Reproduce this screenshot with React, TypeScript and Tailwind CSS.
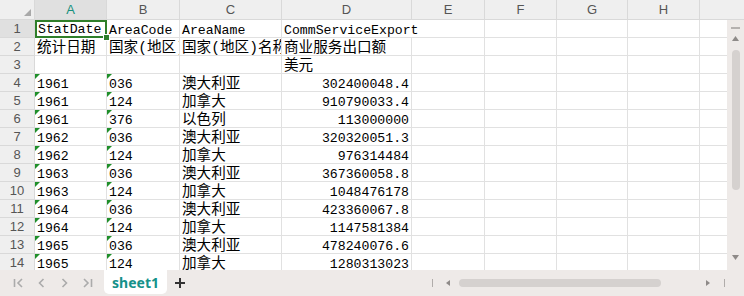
import React from "react";

const cols = [
  { key: "A", w: "w-[72px]" },
  { key: "B", w: "w-[73px]" },
  { key: "C", w: "w-[102px]" },
  { key: "D", w: "w-[130px]" },
  { key: "E", w: "w-[73px]" },
  { key: "F", w: "w-[72px]" },
  { key: "G", w: "w-[71px]" },
  { key: "H", w: "w-[72px]" },
];

type Row = { a?: string; b?: string; c?: string; d?: string; tri?: boolean; num?: boolean; spill?: boolean };

const rows: Row[] = [
  { a: "StatDate", b: "AreaCode", c: "AreaName", d: "CommServiceExport", spill: true },
  { a: "统计日期", b: "国家(地区)代码", c: "国家(地区)名称", d: "商业服务出口额" },
  { d: "美元" },
  { a: "1961", b: "036", c: "澳大利亚", d: "302400048.4", tri: true, num: true },
  { a: "1961", b: "124", c: "加拿大", d: "910790033.4", tri: true, num: true },
  { a: "1961", b: "376", c: "以色列", d: "113000000", tri: true, num: true },
  { a: "1962", b: "036", c: "澳大利亚", d: "320320051.3", tri: true, num: true },
  { a: "1962", b: "124", c: "加拿大", d: "976314484", tri: true, num: true },
  { a: "1963", b: "036", c: "澳大利亚", d: "367360058.8", tri: true, num: true },
  { a: "1963", b: "124", c: "加拿大", d: "1048476178", tri: true, num: true },
  { a: "1964", b: "036", c: "澳大利亚", d: "423360067.8", tri: true, num: true },
  { a: "1964", b: "124", c: "加拿大", d: "1147581384", tri: true, num: true },
  { a: "1965", b: "036", c: "澳大利亚", d: "478240076.6", tri: true, num: true },
  { a: "1965", b: "124", c: "加拿大", d: "1280313023", tri: true, num: true },
];

const cellFont = "font-['Liberation_Mono','Noto_Sans_CJK_SC',monospace] text-[13.2px] leading-[13px] text-black";
const isCjk = (s?: string) => !!s && /[\u4e00-\u9fff]/.test(s);

function Cell({ w, text, tri, right, spill }: { w: string; text?: string; tri?: boolean; right?: boolean; spill?: boolean }) {
  return (
    <div
      className={`relative ${w} shrink-0 h-[18px] border-b border-[#e1e1e1] flex items-end ${spill ? "overflow-visible z-10" : "overflow-hidden border-r"} ${right ? "justify-end pr-[2px]" : "pl-[2px]"}`}
    >
      {tri && (
        <span className="absolute left-0 top-0 w-0 h-0 border-t-[5px] border-r-[5px] border-t-[#1f8f2a] border-r-transparent" />
      )}
      {text && (
        <span className={`${cellFont} whitespace-nowrap ${isCjk(text) ? "text-[14.6px]" : ""}`}>{text}</span>
      )}
    </div>
  );
}

// the active cell A1 with its thick frame and fill handle
function ActiveCell({ text }: { text: string }) {
  return (
    <div className="relative w-[72px] shrink-0 h-[18px] z-20 border-2 border-solid border-[#2f7f2a] flex items-end pl-[1px]">
      <span className={`${cellFont} whitespace-nowrap leading-[12px]`}>{text}</span>
      <span className="absolute right-[-5px] bottom-[-5px] w-[7px] h-[7px] bg-[#2f7f2a] border border-solid border-white" />
    </div>
  );
}

export default function App() {
  return (
    <div className="w-[744px] h-[296px] bg-white overflow-hidden flex flex-col font-['Liberation_Sans',sans-serif]">
      {/* column header */}
      <div className="flex h-[20px] shrink-0 bg-[#efefef] border-b border-[#d9d9d9]">
        <div className="relative w-[35px] shrink-0 border-r border-[#d9d9d9]">
          <svg className="absolute right-[3px] bottom-[3px]" width="7" height="7" viewBox="0 0 7 7">
            <polygon points="7,0 7,7 0,7" fill="#a9a9a9" />
          </svg>
        </div>
        {cols.map((c) => (
          <div
            key={c.key}
            className={`${c.w} shrink-0 border-r border-[#d9d9d9] flex items-center justify-center text-[13px] ${c.key === "A" ? "bg-[#e0e0e0] text-[#17907d]" : "text-[#555]"}`}
          >
            {c.key}
          </div>
        ))}
        <div className="flex-1" />
      </div>

      {/* body */}
      <div className="flex h-[250px] shrink-0 overflow-hidden">
        <div className="flex-1 overflow-hidden">
          {rows.map((r, i) => (
            <div key={i} className="flex h-[18px]">
              <div className={`w-[35px] shrink-0 h-[18px] border-r border-b border-[#d9d9d9] flex items-center justify-center text-[13px] text-[#555] ${i === 0 ? "bg-[#e0e0e0]" : "bg-[#efefef]"}`}>
                {i + 1}
              </div>
              {i === 0 ? <ActiveCell text={r.a ?? ""} /> : <Cell w={cols[0].w} text={r.a} tri={r.tri} />}
              <Cell w={cols[1].w} text={r.b} tri={r.tri} />
              <Cell w={cols[2].w} text={r.c} />
              <Cell w={cols[3].w} text={r.d} right={r.num} spill={r.spill} />
              <Cell w={cols[4].w} />
              <Cell w={cols[5].w} />
              <Cell w={cols[6].w} />
              <Cell w={cols[7].w} />
              <div className="flex-1 h-[18px] border-b border-[#e1e1e1]" />
            </div>
          ))}
        </div>
        {/* vertical scrollbar */}
        <div className="w-[17px] shrink-0 bg-[#eeeae8] flex flex-col items-center pt-[7px]">
          <div className="w-[9px] h-[2px] bg-[#b5b1af]" />
          <svg className="mt-[7px]" width="7" height="5" viewBox="0 0 7 5">
            <polygon points="3.5,0 7,5 0,5" fill="#8e8a88" />
          </svg>
          <div className="mt-[9px] w-[8px] h-[140px] rounded-full bg-[#d5d1cf]" />
          <div className="flex-1" />
          <svg className="mb-[10px]" width="7" height="5" viewBox="0 0 7 5">
            <polygon points="0,0 7,0 3.5,5" fill="#8e8a88" />
          </svg>
        </div>
      </div>

      {/* sheet tabs */}
      <div className="flex-1 bg-[#eeeae8] flex items-start">
        <div className="flex items-center h-[26px] pl-[13px] gap-[12px]">
          <svg width="11" height="12" viewBox="0 0 11 12" fill="none" stroke="#ababab" strokeWidth="1.6">
            <path d="M1.5 2v8M9 2L5 6l4 4" />
          </svg>
          <svg width="11" height="12" viewBox="0 0 11 12" fill="none" stroke="#ababab" strokeWidth="1.6">
            <path d="M7.5 2L3.5 6l4 4" />
          </svg>
          <svg width="11" height="12" viewBox="0 0 11 12" fill="none" stroke="#ababab" strokeWidth="1.6">
            <path d="M3.5 2l4 4-4 4" />
          </svg>
          <svg width="11" height="12" viewBox="0 0 11 12" fill="none" stroke="#ababab" strokeWidth="1.6">
            <path d="M2 2l4 4-4 4M9.5 2v8" />
          </svg>
        </div>
        <div className="ml-[11px] w-[63px] h-[24px] bg-white rounded-b-[5px] flex items-center justify-center text-[14px] font-bold text-[#15918a] font-['Noto_Sans',sans-serif]">
          sheet1
        </div>
        <div className="ml-[7px] h-[26px] flex items-center">
          <svg width="12" height="12" viewBox="0 0 12 12" stroke="#333" strokeWidth="2">
            <path d="M6 1v10M1 6h10" />
          </svg>
        </div>
        <div className="flex-1" />
        <div className="h-[26px] flex items-center pr-[19px]">
          <div className="w-[1px] h-[8px] bg-[#b0acaa]" />
          <svg className="ml-[13px]" width="4" height="6" viewBox="0 0 4 6">
            <polygon points="4,0 4,6 0,3" fill="#8e8a88" />
          </svg>
          <div className="ml-[9px] w-[202px] h-[8px] rounded-full bg-[#d5d1cf]" />
          <svg className="ml-[45px]" width="4" height="6" viewBox="0 0 4 6">
            <polygon points="0,0 4,3 0,6" fill="#8e8a88" />
          </svg>
          <div className="ml-[14px] w-[1px] h-[8px] bg-[#b0acaa]" />
        </div>
      </div>
    </div>
  );
}
